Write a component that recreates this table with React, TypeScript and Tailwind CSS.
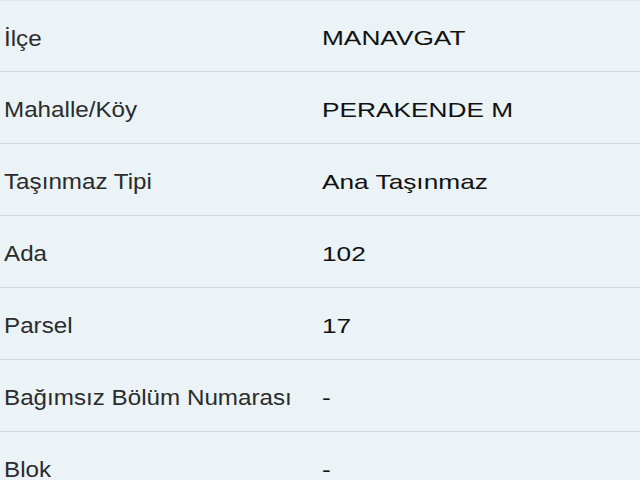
const rows: [string, string][] = [
  ['İlçe', 'MANAVGAT'],
  ['Mahalle/Köy', 'PERAKENDE M'],
  ['Taşınmaz Tipi', 'Ana Taşınmaz'],
  ['Ada', '102'],
  ['Parsel', '17'],
  ['Bağımsız Bölüm Numarası', '-'],
  ['Blok', '-'],
];

export default function App() {
  return (
    <div className="h-[480px] w-[640px] overflow-hidden bg-[#ebf3f6] font-['Liberation_Sans',Arial,sans-serif]">
      <div className="h-[1px] bg-[#dfe6e9]" />
      {rows.map(([label, value], i) => (
        <div
          key={label}
          className={`grid grid-cols-[318px_1fr] items-center border-b border-[#d3dadd] pl-1 pt-1 ${i === 0 ? 'h-[71px]' : 'h-[72px]'}`}
        >
          <span className="origin-left scale-x-[1.1] whitespace-nowrap text-[22px] text-[#2a2c2e]">{label}</span>
          <span className="origin-left scale-x-[1.25] whitespace-nowrap text-[21px] text-[#111111]">{value}</span>
        </div>
      ))}
    </div>
  );
}
